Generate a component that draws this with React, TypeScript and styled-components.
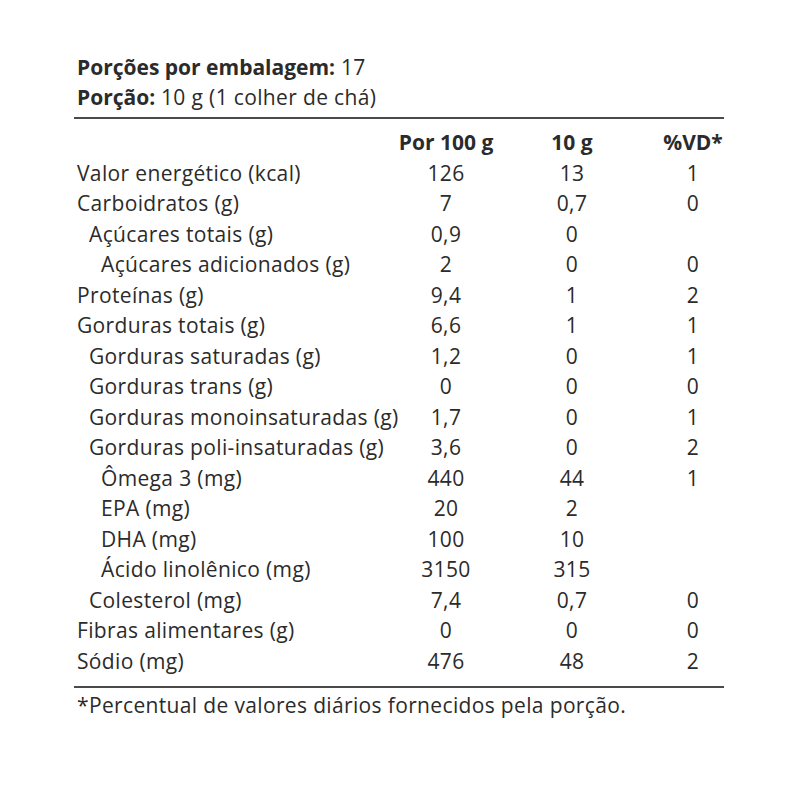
import React from 'react';
import styled, { createGlobalStyle } from 'styled-components';

interface Nutrient {
  label: string;
  level: 0 | 1 | 2;
  per100: string;
  portion: string;
  vd: string;
}

const nutrients: Nutrient[] = [
  { label: 'Valor energético (kcal)', level: 0, per100: '126', portion: '13', vd: '1' },
  { label: 'Carboidratos (g)', level: 0, per100: '7', portion: '0,7', vd: '0' },
  { label: 'Açúcares totais (g)', level: 1, per100: '0,9', portion: '0', vd: '' },
  { label: 'Açúcares adicionados (g)', level: 2, per100: '2', portion: '0', vd: '0' },
  { label: 'Proteínas (g)', level: 0, per100: '9,4', portion: '1', vd: '2' },
  { label: 'Gorduras totais (g)', level: 0, per100: '6,6', portion: '1', vd: '1' },
  { label: 'Gorduras saturadas (g)', level: 1, per100: '1,2', portion: '0', vd: '1' },
  { label: 'Gorduras trans (g)', level: 1, per100: '0', portion: '0', vd: '0' },
  { label: 'Gorduras monoinsaturadas (g)', level: 1, per100: '1,7', portion: '0', vd: '1' },
  { label: 'Gorduras poli-insaturadas (g)', level: 1, per100: '3,6', portion: '0', vd: '2' },
  { label: 'Ômega 3 (mg)', level: 2, per100: '440', portion: '44', vd: '1' },
  { label: 'EPA (mg)', level: 2, per100: '20', portion: '2', vd: '' },
  { label: 'DHA (mg)', level: 2, per100: '100', portion: '10', vd: '' },
  { label: 'Ácido linolênico (mg)', level: 2, per100: '3150', portion: '315', vd: '' },
  { label: 'Colesterol (mg)', level: 1, per100: '7,4', portion: '0,7', vd: '0' },
  { label: 'Fibras alimentares (g)', level: 0, per100: '0', portion: '0', vd: '0' },
  { label: 'Sódio (mg)', level: 0, per100: '476', portion: '48', vd: '2' },
];

const App = () => {
  return (
    <>
      <GlobalStyle />
      <NutritionLabel>
        <Serving>
          <b>Porções por embalagem:</b> 17
        </Serving>
        <Serving>
          <b>Porção:</b> 10 g (1 colher de chá)
        </Serving>
        <Rule />
        <Table>
          <HeadRow>
            <span />
            <Cell>Por 100 g</Cell>
            <Cell>10 g</Cell>
            <Cell>%VD*</Cell>
          </HeadRow>
          {nutrients.map((n) => (
            <Row key={n.label}>
              <Name $level={n.level}>{n.label}</Name>
              <Cell>{n.per100}</Cell>
              <Cell>{n.portion}</Cell>
              <Cell>{n.vd}</Cell>
            </Row>
          ))}
        </Table>
        <Rule $bottom />
        <Note>*Percentual de valores diários fornecidos pela porção.</Note>
      </NutritionLabel>
    </>
  );
};

export default App;

const GlobalStyle = createGlobalStyle`
  body {
    margin: 0;
    background: #ffffff;
    color: #2b2b2b;
    font-family: 'Open Sans', 'Liberation Sans', sans-serif;
  }
`;

const NutritionLabel = styled.div`
  width: 650px;
  padding: 52px 0 0 74px;
  font-size: 21px;
  letter-spacing: 0.35px;
`;

const Serving = styled.div`
  line-height: 30px;
  padding-left: 3px;
  b {
    font-weight: 700;
    letter-spacing: 0;
  }
`;

const Rule = styled.div<{ $bottom?: boolean }>`
  height: 2px;
  background: #4a4a4a;
  margin: ${(p) => (p.$bottom ? '10px 0 2px' : '5px 0 8px')};
`;

const Table = styled.div`
  display: flex;
  flex-direction: column;
`;

const Row = styled.div`
  display: grid;
  grid-template-columns: 312px 120px 132px 110px;
  line-height: 30.5px;
`;

const HeadRow = styled(Row)`
  font-weight: 700;
  letter-spacing: 0;
`;

const Name = styled.div<{ $level: number }>`
  padding-left: ${(p) => 3 + p.$level * 12}px;
  white-space: nowrap;
`;

const Cell = styled.div`
  text-align: center;
`;

const Note = styled.div`
  line-height: 30px;
  padding-left: 3px;
`;
